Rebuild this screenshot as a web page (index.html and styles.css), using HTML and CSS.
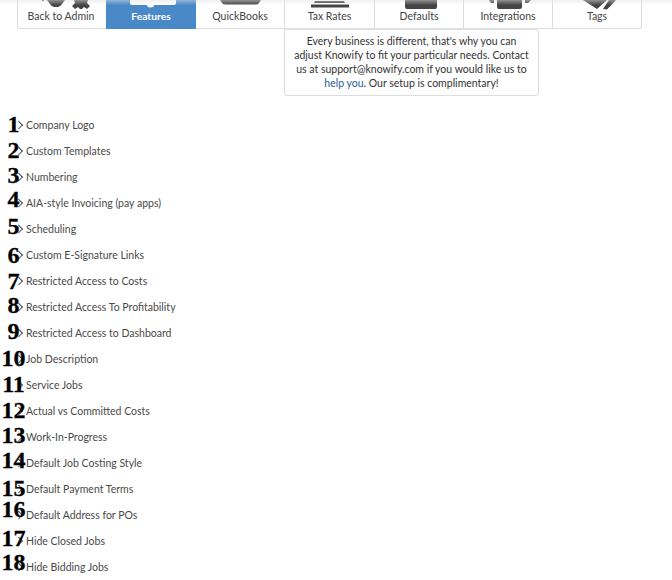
FILE: index.html
```html
<!DOCTYPE html>
<html lang="en">
<head>
<meta charset="utf-8">
<title>Features</title>
<link rel="stylesheet" href="styles.css">
</head>
<body>
<div class="shade"></div>
<nav class="tabs">
  <a class="tab tab-first"><span class="tab-icon"><svg width="60" height="10" viewBox="0 0 60 10"><path class="ic" d="M10 0h2v1h-2zM15 0h18l-3 4q-1 2-4 3h-4q-3-1-4-3z"/><path class="ic" d="M42 0h14l-1 3 3 3-3 3-3-2-2 2h-2l-2-2-3 2-3-3 3-3z"/></svg></span><span class="tab-label">Back to Admin</span></a>
  <a class="tab tab-active"><span class="tab-icon"><svg width="60" height="10" viewBox="0 0 60 10"><path class="ic-w" d="M9 0h46v3q0 2-2 2H33a3.5 2.5 0 0 1-7 0H11q-2 0-2-2z"/></svg></span><span class="tab-label">Features</span></a>
  <a class="tab"><span class="tab-icon"><svg width="60" height="10" viewBox="0 0 60 10"><path class="ic" d="M10 0h41l-2 3q-1 1.500-3 1.500H16q-3 0-4-1.500z"/></svg></span><span class="tab-label">QuickBooks</span></a>
  <a class="tab tab-wide"><span class="tab-icon"><svg width="60" height="10" viewBox="0 0 60 10"><path class="ic" d="M15 1h29l1 2H14zM11 4.500h38v3H11z"/></svg></span><span class="tab-label">Tax Rates</span></a>
  <a class="tab"><span class="tab-icon"><svg width="60" height="10" viewBox="0 0 60 10"><path class="ic" d="M16 0h32v7q0 2-2 2H18q-2 0-2-2z"/></svg></span><span class="tab-label">Defaults</span></a>
  <a class="tab"><span class="tab-icon"><svg width="60" height="10" viewBox="0 0 60 10"><path class="ic" d="M19 0h25v7q0 2-2 2H21q-2 0-2-2zM11 0h5v3h-3zM47 0h6l-3 3h-3z"/></svg></span><span class="tab-label">Integrations</span></a>
  <a class="tab tab-last"><span class="tab-icon"><svg width="60" height="10" viewBox="0 0 60 10"><path class="ic" d="M16 0h24l-10 9zM42 0h7l-9 9.500-4-.5z"/></svg></span><span class="tab-label">Tags</span></a>
</nav>
<div class="note-row">
  <div class="note">Every business is different, that's why you can adjust Knowify to fit your particular needs. Contact us at support@knowify.com if you would like us to <span class="link">help you</span>. Our setup is complimentary!</div>
</div>
<ol class="features">
  <li><span class="chev"></span><span>Company Logo</span></li>
  <li><span class="chev"></span><span>Custom Templates</span></li>
  <li><span class="chev"></span><span>Numbering</span></li>
  <li><span class="chev"></span><span>AIA-style Invoicing (pay apps)</span></li>
  <li><span class="chev"></span><span>Scheduling</span></li>
  <li><span class="chev"></span><span>Custom E-Signature Links</span></li>
  <li><span class="chev"></span><span>Restricted Access to Costs</span></li>
  <li><span class="chev"></span><span>Restricted Access To Profitability</span></li>
  <li><span class="chev"></span><span>Restricted Access to Dashboard</span></li>
  <li><span class="chev"></span><span>Job Description</span></li>
  <li><span class="chev"></span><span>Service Jobs</span></li>
  <li><span class="chev"></span><span>Actual vs Committed Costs</span></li>
  <li><span class="chev"></span><span>Work-In-Progress</span></li>
  <li><span class="chev"></span><span>Default Job Costing Style</span></li>
  <li><span class="chev"></span><span>Default Payment Terms</span></li>
  <li><span class="chev"></span><span>Default Address for POs</span></li>
  <li><span class="chev"></span><span>Hide Closed Jobs</span></li>
  <li><span class="chev"></span><span>Hide Bidding Jobs</span></li>
</ol>
</body>
</html>
```
FILE: styles.css
```css
html, body { margin: 0; padding: 0; height: 580px; overflow: hidden; background: #fff; }
body { font-family: Lato, "Open Sans", sans-serif; color: #333; font-size: 10px; position: relative; }
.shade { position: absolute; z-index: 2; top: 0; left: 0; right: 0; height: 5px; background: linear-gradient(rgba(225,225,225,.5), rgba(255,255,255,0)); }
.tabs { display: flex; margin-left: 17px; width: 625px; height: 29px; box-sizing: border-box; border: 1px solid #ddd; border-top: 0; border-radius: 0 0 3px 3px; }
.tab { width: 89px; flex: none; box-sizing: border-box; border-right: 1px solid #ddd; display: flex; flex-direction: column; align-items: center; color: #444; }
.tab-first { width: 88px; border-right: 0; padding-right: 2px; }
.tab-first .tab-icon { margin-left: 2px; }
.tab-wide { width: 90px; }
.tab-last { border-right: 0; flex: 1; }
.tab-active { width: 90px; background: #4a89c8; color: #fff; height: 29px; border-right: 0; font-weight: 700; }
.tab-icon { height: 10px; display: block; line-height: 0; overflow: hidden; }
.tab-label { font-size: 10.500px; line-height: 13px; }
.tab-active .tab-label { font-size: 10.300px; }
.ic { fill: #444; }
.ic-w { fill: #fff; }
.note-row { display: flex; padding-left: 284px; }
.note { width: 255px; height: 67px; box-sizing: border-box; border: 1px solid #ddd; border-radius: 0 3px 3px 3px; text-align: center; padding: 4px 9px 0; font-size: 10.500px; line-height: 14px; color: #333; }
.link { color: #2a5d94; }
.features { list-style: none; margin: 16px 0 0; padding: 0; counter-reset: n; }
.features li { --base: 20px; counter-increment: n; height: 26px; display: flex; align-items: center; position: relative; padding-left: 26px; font-size: 10.500px; color: #4a4a4a; }
.features li::before { content: counter(n); position: absolute; z-index: 1; left: 0; width: 27px; text-align: center; top: calc(var(--base) - 21px); font: 700 24px/26px "Liberation Serif", serif; color: #000; -webkit-text-stroke: .3px #000; }
.chev { position: absolute; left: 15.500px; top: 10px; width: 4.500px; height: 4.500px; border-top: 1.200px solid #444; border-right: 1.200px solid #444; transform: rotate(45deg); }
.features li:nth-child(3), .features li:nth-child(8), .features li:nth-child(9), .features li:nth-child(13) { --base: 19px; }
.features li:nth-child(4) { --base: 17px; }
.features li:nth-child(5), .features li:nth-child(14), .features li:nth-child(17) { --base: 18px; }
.features li:nth-child(6), .features li:nth-child(7) { --base: 21px; }
.features li:nth-child(16) { --base: 15px; }
.features li:nth-child(18) { --base: 16px; }
```
